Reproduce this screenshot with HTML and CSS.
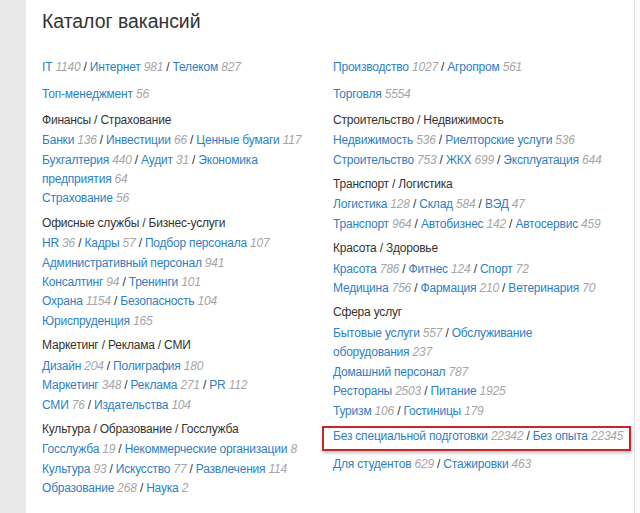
FILE: index.html
```html
<!DOCTYPE html>
<html lang="ru">
<head>
<meta charset="utf-8">
<title>Каталог вакансий</title>
<link rel="stylesheet" href="styles.css">
</head>
<body>
<div class="page">
  <div class="strip"></div>
  <div class="main">
    <h1 class="title">Каталог вакансий</h1>
    <div class="catalog">
      <div class="col">
        <div class="group solo"><a href="#">IT</a>&nbsp;<span class="c">1140</span> / <a href="#">Интернет</a>&nbsp;<span class="c">981</span> / <a href="#">Телеком</a>&nbsp;<span class="c">827</span></div>
        <div class="group solo"><a href="#">Топ-менеджмент</a>&nbsp;<span class="c">56</span></div>
        <div class="group">
          <div class="head">Финансы / Страхование</div>
          <div class="row"><a href="#">Банки</a>&nbsp;<span class="c">136</span> / <a href="#">Инвестиции</a>&nbsp;<span class="c">66</span> / <a href="#">Ценные бумаги</a>&nbsp;<span class="c">117</span></div>
          <div class="row"><a href="#">Бухгалтерия</a>&nbsp;<span class="c">440</span> / <a href="#">Аудит</a>&nbsp;<span class="c">31</span> / <a href="#">Экономика</a> <a href="#">предприятия</a>&nbsp;<span class="c">64</span></div>
          <div class="row"><a href="#">Страхование</a>&nbsp;<span class="c">56</span></div>
        </div>
        <div class="group">
          <div class="head">Офисные службы / Бизнес-услуги</div>
          <div class="row"><a href="#">HR</a>&nbsp;<span class="c">36</span> / <a href="#">Кадры</a>&nbsp;<span class="c">57</span> / <a href="#">Подбор персонала</a>&nbsp;<span class="c">107</span></div>
          <div class="row"><a href="#">Административный персонал</a>&nbsp;<span class="c">941</span></div>
          <div class="row"><a href="#">Консалтинг</a>&nbsp;<span class="c">94</span> / <a href="#">Тренинги</a>&nbsp;<span class="c">101</span></div>
          <div class="row"><a href="#">Охрана</a>&nbsp;<span class="c">1154</span> / <a href="#">Безопасность</a>&nbsp;<span class="c">104</span></div>
          <div class="row"><a href="#">Юриспруденция</a>&nbsp;<span class="c">165</span></div>
        </div>
        <div class="group">
          <div class="head">Маркетинг / Реклама / СМИ</div>
          <div class="row"><a href="#">Дизайн</a>&nbsp;<span class="c">204</span> / <a href="#">Полиграфия</a>&nbsp;<span class="c">180</span></div>
          <div class="row"><a href="#">Маркетинг</a>&nbsp;<span class="c">348</span> / <a href="#">Реклама</a>&nbsp;<span class="c">271</span> / <a href="#">PR</a>&nbsp;<span class="c">112</span></div>
          <div class="row"><a href="#">СМИ</a>&nbsp;<span class="c">76</span> / <a href="#">Издательства</a>&nbsp;<span class="c">104</span></div>
        </div>
        <div class="group">
          <div class="head">Культура / Образование / Госслужба</div>
          <div class="row"><a href="#">Госслужба</a>&nbsp;<span class="c">19</span> / <a href="#">Некоммерческие организации</a>&nbsp;<span class="c">8</span></div>
          <div class="row"><a href="#">Культура</a>&nbsp;<span class="c">93</span> / <a href="#">Искусство</a>&nbsp;<span class="c">77</span> / <a href="#">Развлечения</a>&nbsp;<span class="c">114</span></div>
          <div class="row"><a href="#">Образование</a>&nbsp;<span class="c">268</span> / <a href="#">Наука</a>&nbsp;<span class="c">2</span></div>
        </div>
      </div>
      <div class="col">
        <div class="group solo"><a href="#">Производство</a>&nbsp;<span class="c">1027</span> / <a href="#">Агропром</a>&nbsp;<span class="c">561</span></div>
        <div class="group solo"><a href="#">Торговля</a>&nbsp;<span class="c">5554</span></div>
        <div class="group">
          <div class="head">Строительство / Недвижимость</div>
          <div class="row"><a href="#">Недвижимость</a>&nbsp;<span class="c">536</span> / <a href="#">Риелторские услуги</a>&nbsp;<span class="c">536</span></div>
          <div class="row"><a href="#">Строительство</a>&nbsp;<span class="c">753</span> / <a href="#">ЖКХ</a>&nbsp;<span class="c">699</span> / <a href="#">Эксплуатация</a>&nbsp;<span class="c">644</span></div>
        </div>
        <div class="group">
          <div class="head">Транспорт / Логистика</div>
          <div class="row"><a href="#">Логистика</a>&nbsp;<span class="c">128</span> / <a href="#">Склад</a>&nbsp;<span class="c">584</span> / <a href="#">ВЭД</a>&nbsp;<span class="c">47</span></div>
          <div class="row"><a href="#">Транспорт</a>&nbsp;<span class="c">964</span> / <a href="#">Автобизнес</a>&nbsp;<span class="c">142</span> / <a href="#">Автосервис</a>&nbsp;<span class="c">459</span></div>
        </div>
        <div class="group">
          <div class="head">Красота / Здоровье</div>
          <div class="row"><a href="#">Красота</a>&nbsp;<span class="c">786</span> / <a href="#">Фитнес</a>&nbsp;<span class="c">124</span> / <a href="#">Спорт</a>&nbsp;<span class="c">72</span></div>
          <div class="row"><a href="#">Медицина</a>&nbsp;<span class="c">756</span> / <a href="#">Фармация</a>&nbsp;<span class="c">210</span> / <a href="#">Ветеринария</a>&nbsp;<span class="c">70</span></div>
        </div>
        <div class="group">
          <div class="head">Сфера услуг</div>
          <div class="row"><a href="#">Бытовые услуги</a>&nbsp;<span class="c">557</span> / <a href="#">Обслуживание</a> <a href="#">оборудования</a>&nbsp;<span class="c">237</span></div>
          <div class="row"><a href="#">Домашний персонал</a>&nbsp;<span class="c">787</span></div>
          <div class="row"><a href="#">Рестораны</a>&nbsp;<span class="c">2503</span> / <a href="#">Питание</a>&nbsp;<span class="c">1925</span></div>
          <div class="row"><a href="#">Туризм</a>&nbsp;<span class="c">106</span> / <a href="#">Гостиницы</a>&nbsp;<span class="c">179</span></div>
        </div>
        <div class="group solo marked"><a href="#">Без специальной подготовки</a>&nbsp;<span class="c">22342</span> / <a href="#">Без опыта</a>&nbsp;<span class="c">22345</span></div>
        <div class="group solo"><a href="#">Для студентов</a>&nbsp;<span class="c">629</span> / <a href="#">Стажировки</a>&nbsp;<span class="c">463</span></div>
      </div>
    </div>
  </div>
  <div class="rest"></div>
</div>
</body>
</html>
```

FILE: styles.css
```css
html, body {
  margin: 0;
  padding: 0;
  height: 100%;
}
body {
  font-family: "Liberation Sans", Arial, sans-serif;
  font-size: 12px;
  letter-spacing: -0.2px;
  color: #333;
  background: #ffffff;
}
.page {
  display: flex;
  min-height: 513px;
}
.strip {
  flex: 0 0 26px;
  background: #e9e9e9;
}
.main {
  flex: 0 0 609px;
  background: #fff;
  border-right: 1px solid #e6e6e6;
  padding-left: 16px;
  box-sizing: border-box;
}
.rest {
  flex: 1;
  background: #fbfbfb;
}
.title {
  margin: 10px 0 0;
  font-size: 19.4px;
  line-height: 23px;
  letter-spacing: 0;
  font-weight: normal;
  color: #333;
}
.catalog {
  display: grid;
  grid-template-columns: 291px 290px;
  margin-top: 23px;
}
.group {
  line-height: 19.4px;
  margin-bottom: 5px;
}
.solo {
  padding: 1.5px 0;
}
.head {
  color: #333;
  margin-bottom: 1px;
}
.row {
  color: #333;
}
a {
  color: #2f80c3;
  text-decoration: none;
}
.c {
  color: #a6a6a6;
  font-style: italic;
}
.marked {
  position: relative;
  margin-top: 2px;
  white-space: nowrap;
}
.marked::after {
  content: "";
  position: absolute;
  left: -11px;
  width: 309px;
  top: 0;
  height: 25px;
  box-sizing: border-box;
  border: 2px solid #c8262c;
  box-shadow: 1px 2px 3px rgba(0, 0, 0, 0.25);
  pointer-events: none;
}
```
